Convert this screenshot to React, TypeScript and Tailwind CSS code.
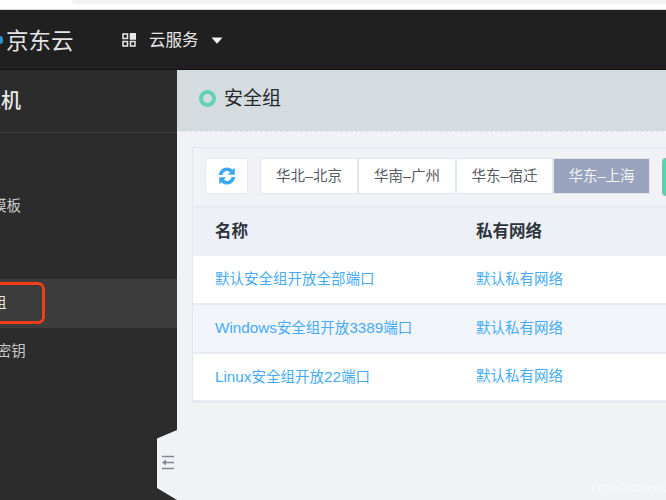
const cjk = { fontFamily: '"Liberation Sans", "Noto Sans CJK SC", sans-serif' };

function Refresh() {
  return (
    <svg width="18" height="18" viewBox="0 0 18 18" fill="#3ba9f5">
      <path d="M0.800 8C1.300 3.500 4.800 .5 9 .5c2.200 0 4.200.9 5.600 2.300L16.800 .7v7h-7l2.300-2.300C11.300 4.600 10.200 4 9 4 6.700 4 5 5.500 4.500 8z" />
      <path d="M17.200 10C16.700 14.500 13.200 17.500 9 17.500c-2.200 0-4.200-.9-5.600-2.300L1.200 17.300v-7h7l-2.300 2.300C6.700 13.400 7.800 14 9 14c2.300 0 4-1.500 4.500-4z" />
    </svg>
  );
}

function Tab({ label, active, w }: { label: string; active?: boolean; w: string }) {
  return (
    <div
      className={
        active
          ? `${w} flex items-center justify-center pt-[1px] bg-[#9aa3bd] text-[#f4f5f8] border border-[#e0e6ee]`
          : `${w} flex items-center justify-center pt-[1px] bg-white text-[#555b63] border border-[#e0e6ee]`
      }
    >
      {label}
    </div>
  );
}

function Row({ children, alt, h }: { children: React.ReactNode; alt?: boolean; h: string }) {
  return (
    <div className={`${h} ${alt ? "bg-[#f2f5fa]" : "bg-white"} flex items-center text-[#45abf8] text-[14.500px] pl-[22px] border-b-2 border-[#e8ebef]`}>
      <div className="w-[261px] whitespace-nowrap">{children}</div>
      <div className="whitespace-nowrap">默认私有网络</div>
    </div>
  );
}

function L({ children }: { children: React.ReactNode }) {
  return <span className="text-[15.250px]">{children}</span>;
}

export default function App() {
  return (
    <div className="w-[666px] h-[500px] overflow-hidden relative bg-[#f1f2f5]" style={cjk}>
      <div className="h-[10px] bg-white border-b border-[#d8d8d8]">
        <div className="ml-[72px] h-[4px] bg-[#f3f3f5] rounded-bl-[6px]" />
      </div>
      <header className="h-[60px] bg-[#202020] flex items-center border-b border-[#111]">
        <div className="w-[3px] h-[8px] bg-[#2f8fc7] rounded-r-full mt-[1px]" />
        <span className="ml-[3px] w-[116px] mt-[5px] text-[22.500px] leading-none text-[#e4e4e4] whitespace-nowrap">京东云</span>
        <svg width="14" height="14" viewBox="0 0 14 14" fill="none" stroke="#e8e8e8" strokeWidth="1.500">
          <rect x="1" y="1" width="4.500" height="4.500" />
          <rect x="8.500" y="0.500" width="5" height="5.500" fill="#e8e8e8" />
          <rect x="1" y="8.500" width="4.500" height="4.500" />
          <rect x="8.500" y="8.500" width="4.500" height="4.500" />
        </svg>
        <span className="ml-[13px] mt-[1px] text-[16.500px] text-[#e6e6e6] whitespace-nowrap">云服务</span>
        <svg className="ml-[12px] mt-[2px]" width="12" height="7" viewBox="0 0 12 7" fill="#f0f0f0"><path d="M0.500 0.500h11L6 6.800z" /></svg>
      </header>
      <div className="flex h-[430px]">
        <aside className="w-[177px] shrink-0 bg-[#2c2c2c] flex flex-col overflow-hidden">
          <div className="h-[63px] shrink-0 border-b border-[#3c3c3c] flex items-center">
            <span className="-ml-[39px] text-[20px] text-[#ebebeb] font-medium whitespace-nowrap">云主机</span>
          </div>
          <div className="h-[49px] mt-[48px] pt-[2px] flex items-center text-[14.500px] text-[#c8c8c8] -ml-[37px] whitespace-nowrap">实例模板</div>
          <div className="h-[49px]" />
          <div className="h-[49px] bg-[#3c3c3c] flex items-center text-[14.500px] text-[#e8e8e8] relative whitespace-nowrap">
            <span className="-ml-[37px]">安全组</span>
            <div className="absolute left-[-10px] top-[3px] w-[55px] h-[42px] border-[3px] border-[#f23f18] rounded-[7px]" />
          </div>
          <div className="h-[49px] pb-[2px] flex items-center text-[14.500px] text-[#c8c8c8] -ml-[33px] whitespace-nowrap">SSH密钥</div>
        </aside>
        <main className="flex-1 min-w-0 relative">
          <div className="h-[62px] bg-[#d5dcdf] border-b border-dashed border-[#f4f5f6] flex items-center pl-[22px] pb-[3px]">
            <div className="w-[17px] h-[17px] mb-[1px] rounded-full border-[4px] border-[#62d2b0]" />
            <span className="ml-[8px] text-[19px] text-[#26292d] whitespace-nowrap">安全组</span>
          </div>
          <section className="ml-[15px] mt-[15px] w-[500px] border border-[#e4e8ee] border-r-0 text-[14.500px]">
            <div className="h-[60px] flex items-start pl-[12px] pt-[10px] border-b-2 border-[#e8ebf0]">
              <button className="w-[43px] h-[36px] bg-white border border-[#e3e8ee] rounded-[3px] flex items-center justify-center"><Refresh /></button>
              <div className="ml-[12px] h-[36px] flex">
                <Tab w="w-[98px]" label="华北–北京" />
                <Tab w="w-[98px]" label="华南–广州" />
                <Tab w="w-[97px]" label="华东–宿迁" />
                <Tab w="w-[97px]" label="华东–上海" active />
              </div>
              <div className="ml-[12px] w-[20px] h-[38px] bg-[#60d0ad] rounded-l-[4px] shrink-0" />
            </div>
            <div className="h-[48px] pb-[2px] bg-[#edf0f6] flex items-center pl-[22px] text-[16.500px] font-semibold text-[#2e343c]">
              <div className="w-[261px]">名称</div>
              <div>私有网络</div>
            </div>
            <Row h="h-[49px]">默认安全组开放全部端口</Row>
            <Row h="h-[49px]" alt><L>Windows</L>安全组开放<L>3389</L>端口</Row>
            <Row h="h-[48px]"><L>Linux</L>安全组开放<L>22</L>端口</Row>
          </section>
          <div className="absolute left-[421px] bottom-[3px] text-[12px] text-white/50 whitespace-nowrap">https://blog.csdn</div>
        </main>
      </div>
      <svg className="absolute left-[157px] top-[430px]" width="20" height="70" viewBox="0 0 20 70">
        <path d="M20 0L0 8.500V58L20 70z" fill="#f1f2f5" />
        <g stroke="#85888d" strokeWidth="1.400" fill="none">
          <path d="M5 26.500h12M9 32.500h8M5 38.500h12" />
        </g>
        <path d="M9 29.500v6L5 32.500z" fill="#85888d" />
      </svg>
    </div>
  );
}
